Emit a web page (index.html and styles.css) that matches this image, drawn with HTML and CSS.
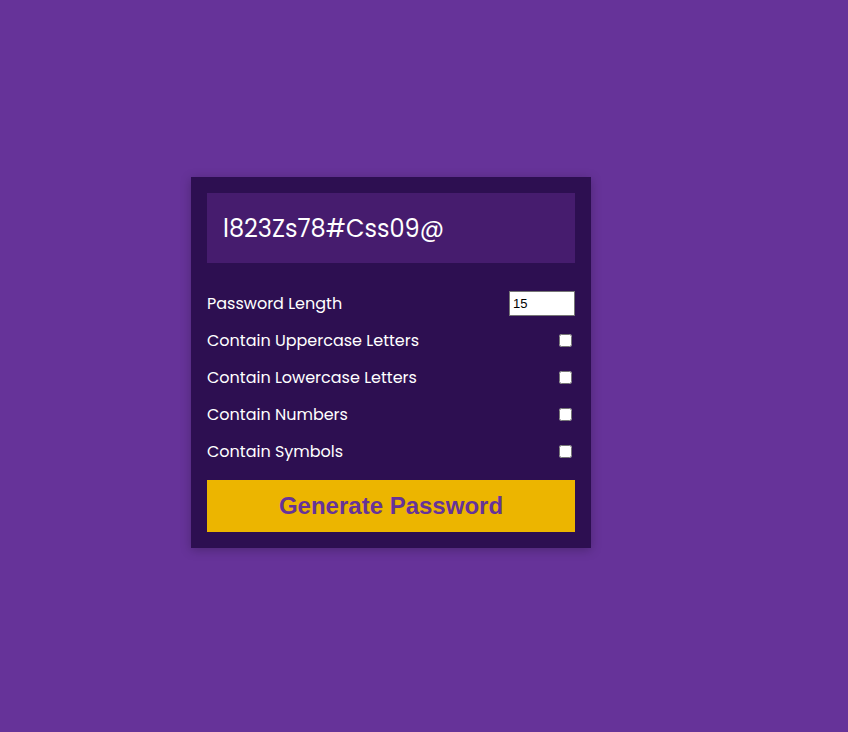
FILE: index.html
```html
<!DOCTYPE html>
<html lang="en">
<head>
<meta charset="UTF-8">
<title>Password Generator</title>
<link rel="stylesheet" href="styles.css">
</head>
<body>
<div class="page">
  <div class="card">
    <div class="result"><span class="result-text">l823Zs78#Css09@</span></div>
    <div class="setting">
      <label>Password Length</label>
      <input type="number" class="length" value="15">
    </div>
    <div class="setting">
      <label>Contain Uppercase Letters</label>
      <input type="checkbox" class="check">
    </div>
    <div class="setting">
      <label>Contain Lowercase Letters</label>
      <input type="checkbox" class="check">
    </div>
    <div class="setting">
      <label>Contain Numbers</label>
      <input type="checkbox" class="check">
    </div>
    <div class="setting">
      <label>Contain Symbols</label>
      <input type="checkbox" class="check">
    </div>
    <button class="generate">Generate Password</button>
  </div>
</div>
</body>
</html>
```
FILE: styles.css
```css
* { box-sizing: border-box; }
html, body { margin: 0; padding: 0; }
body {
  background: #663399;
  font-family: "Poppins", "Open Sans", "Noto Sans", sans-serif;
  color: #ffffff;
}
.page {
  width: 848px;
  height: 732px;
  display: flex;
  align-items: center;
  justify-content: flex-start;
  padding-left: 191px;
  padding-bottom: 7px;
}
.card {
  width: 400px;
  background: #2d0f51;
  padding: 16px;
  box-shadow: 0 2px 10px rgba(0, 0, 0, 0.25);
}
.result {
  height: 70px;
  background: #461c6e;
  display: flex;
  align-items: center;
  padding-left: 16px;
  margin-bottom: 22px;
}
.result-text {
  font-size: 24px;
}
.setting {
  height: 37px;
  display: flex;
  align-items: center;
  justify-content: space-between;
  font-size: 16px;
}
.length {
  width: 66px;
  height: 25px;
  margin: 0;
  border: 1px solid #767676;
  font-family: "Liberation Sans", Arial, sans-serif;
  font-size: 13px;
  padding: 0 3px;
  background: #fff;
  color: #000;
}
.check {
  width: 13px;
  height: 13px;
  margin: 0 3px 0 0;
}
.generate {
  display: block;
  width: 100%;
  height: 52px;
  margin-top: 10px;
  border: none;
  background: #ecb500;
  color: #663399;
  font-family: "Liberation Sans", Arial, sans-serif;
  font-weight: bold;
  font-size: 24px;
  cursor: pointer;
}
```
